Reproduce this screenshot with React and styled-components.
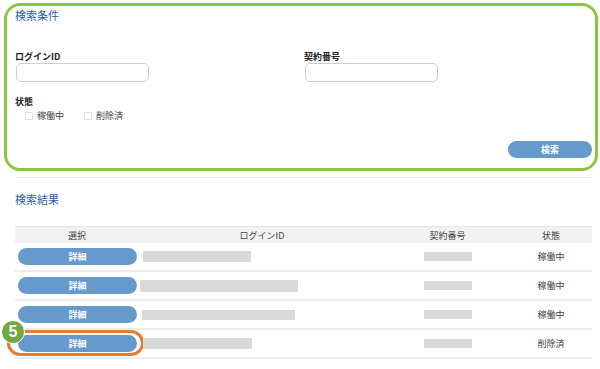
import React from 'react';
import styled, { createGlobalStyle } from 'styled-components';

const GlobalStyle = createGlobalStyle`
  html, body {
    margin: 0;
    padding: 0;
    background: #fff;
    font-family: "Noto Sans CJK JP", "Noto Sans", sans-serif;
    color: #333;
  }
`;

const Page = styled.div`
  width: 600px;
  height: 369px;
  padding: 3px 2px 0 4px;
  box-sizing: border-box;
  overflow: hidden;
`;

const SearchPanel = styled.div`
  border: 3px solid #8cc63f;
  border-radius: 16px;
  padding: 2px 3px 10px 8px;
`;

const SectionTitle = styled.div`
  font-size: 11px;
  line-height: 14px;
  color: #2b5ba8;
  margin: ${(p) => p.$margin || '0'};
`;

const FieldRow = styled.div`
  display: grid;
  grid-template-columns: 289px 1fr;
  margin-top: 29px;
`;

const Field = styled.div`
  display: flex;
  flex-direction: column;
`;

const Label = styled.div`
  font-size: 9px;
  line-height: 12px;
  font-weight: bold;
  color: #222;
`;

const TextInput = styled.input`
  width: 133px;
  height: 19px;
  margin: 0 0 0 1px;
  padding: 0 6px;
  box-sizing: border-box;
  border: 1px solid #c9cdd8;
  border-radius: 5px;
  background: #fff;
  outline: none;
`;

const StatusBlock = styled.div`
  margin-top: 14px;
`;

const CheckRow = styled.div`
  display: flex;
  gap: 20px;
  padding-left: 10px;
  margin-top: 2px;
`;

const CheckItem = styled.label`
  display: flex;
  align-items: center;
  gap: 4px;
  font-size: 9px;
  line-height: 12px;
  color: #444;
`;

const Box = styled.span`
  width: 8px;
  height: 8px;
  border: 1px solid #dde2ea;
  box-sizing: border-box;
  background: #fff;
`;

const ActionBar = styled.div`
  display: flex;
  justify-content: flex-end;
  margin-top: 19px;
`;

const PillButton = styled.button`
  width: ${(p) => p.$width};
  height: 17px;
  border: none;
  border-radius: 9px;
  background: #6699cc;
  color: #fff;
  font-family: inherit;
  font-size: 9px;
  font-weight: bold;
  line-height: 17px;
  padding: 0;
  cursor: pointer;
`;

const Divider = styled.div`
  height: 1px;
  background: #ececec;
  margin: 6px 6px 0 11px;
`;

const Table = styled.div`
  margin: 20px 6px 0 11px;
`;

const Row = styled.div`
  display: grid;
  grid-template-columns: 124px 246px 125px 1fr;
  align-items: center;
  height: ${(p) => (p.$head ? '16px' : '27px')};
  background: ${(p) => (p.$head ? '#f1f1f1' : '#fff')};
  border-top: ${(p) => (p.$head ? '1px solid #e6e6e6' : 'none')};
  border-bottom: ${(p) => (p.$head ? 'none' : '2px solid #ededed')};
  font-size: 9px;
  color: #444;
`;

const Cell = styled.div`
  position: relative;
  display: flex;
  justify-content: ${(p) => p.$align || 'center'};
  padding: ${(p) => p.$pad || '0'};
`;

const Placeholder = styled.div`
  height: ${(p) => p.$h}px;
  background: #d9d9d9;
`;

const Highlight = styled.div`
  position: absolute;
  left: -8px;
  top: -5px;
  width: 137px;
  height: 26px;
  border: 3px solid #ea7b2c;
  border-radius: 14px;
  box-sizing: border-box;
  pointer-events: none;
`;

const StepBadge = styled.div`
  position: absolute;
  left: -14px;
  top: -15px;
  width: 24px;
  height: 24px;
  border-radius: 50%;
  background: #70a844;
  border: 1px solid #fff;
  box-sizing: border-box;
  color: #fff;
  font-family: "Liberation Sans", Arial, sans-serif;
  font-weight: bold;
  font-size: 16px;
  line-height: 22px;
  text-align: center;
`;

const rows = [
  { login: 108, loginH: 11, loginShift: 4, contractH: 9, status: '稼働中' },
  { login: 158, loginH: 12, loginShift: 1, contractH: 9, status: '稼働中' },
  { login: 153, loginH: 10, loginShift: 3, contractH: 9, status: '稼働中' },
  { login: 109, loginH: 11, loginShift: 4, contractH: 9, status: '削除済', marked: true },
];

export default function App() {
  return (
    <Page>
      <GlobalStyle />
      <SearchPanel>
        <SectionTitle>検索条件</SectionTitle>
        <FieldRow>
          <Field>
            <Label>ログインID</Label>
            <TextInput />
          </Field>
          <Field>
            <Label>契約番号</Label>
            <TextInput />
          </Field>
        </FieldRow>
        <StatusBlock>
          <Label>状態</Label>
          <CheckRow>
            <CheckItem>
              <Box />
              稼働中
            </CheckItem>
            <CheckItem>
              <Box />
              削除済
            </CheckItem>
          </CheckRow>
        </StatusBlock>
        <ActionBar>
          <PillButton $width="84px">検索</PillButton>
        </ActionBar>
      </SearchPanel>
      <Divider />
      <SectionTitle $margin="14px 0 0 11px">検索結果</SectionTitle>
      <Table>
        <Row $head>
          <Cell>選択</Cell>
          <Cell>ログインID</Cell>
          <Cell>契約番号</Cell>
          <Cell>状態</Cell>
        </Row>
        {rows.map((r, i) => (
          <Row key={i}>
            <Cell $align="flex-start" $pad="0 0 0 3px">
              <PillButton $width="119px">詳細</PillButton>
              {r.marked && (
                <>
                  <Highlight />
                  <StepBadge>5</StepBadge>
                </>
              )}
            </Cell>
            <Cell $align="flex-start" $pad={`0 0 0 ${r.loginShift}px`}>
              <Placeholder $h={r.loginH} style={{ width: r.login }} />
            </Cell>
            <Cell>
              <Placeholder $h={r.contractH} style={{ width: 48 }} />
            </Cell>
            <Cell>{r.status}</Cell>
          </Row>
        ))}
      </Table>
    </Page>
  );
}
